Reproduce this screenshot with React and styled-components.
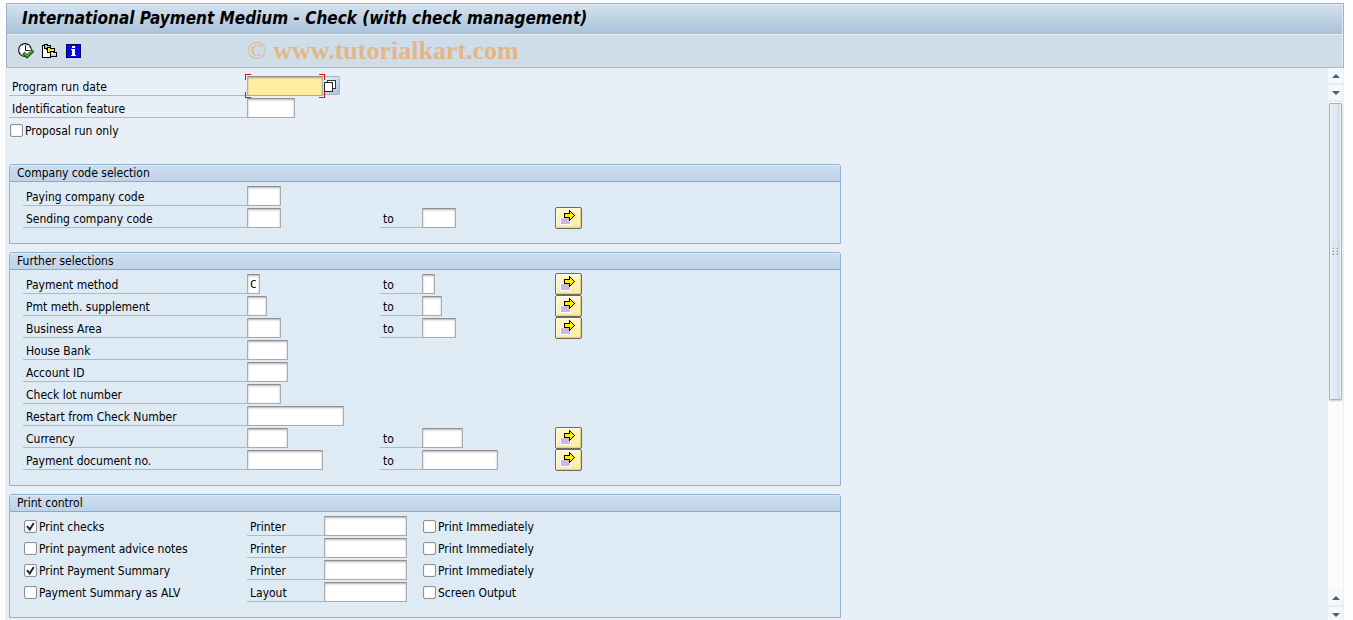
import React, { useState } from 'react';
import styled, { createGlobalStyle, css } from 'styled-components';

const GlobalStyle = createGlobalStyle`
  * {
    box-sizing: border-box;
  }

  body {
    margin: 0;
    background: #fdfdfe;
    color: #000;
    font-family: 'DejaVu Sans Condensed', 'DejaVu Sans', sans-serif;
    font-size: 12px;
    line-height: 18px;
  }

  button, input {
    font: inherit;
    color: inherit;
    margin: 0;
    padding: 0;
  }
`;

const Window = styled.div`
  display: flex;
  flex-direction: column;
  height: 100vh;
  padding: 3px 9px 0 5px;
  overflow: hidden;
`;

const Header = styled.header`
  margin-left: 1px;
  border: 1px solid #9cb0c8;
  border-bottom-color: #a9bac8;
`;

const TitleBar = styled.div`
  height: 31px;
  padding: 0 15px;
  border: 1px solid #e4ecf5;
  border-left-width: 0;
  background: linear-gradient(#d3e1ed, #b9cee2 60%, #a9c1dc);
`;

const Title = styled.h1`
  margin: 0;
  font-size: 17px;
  font-style: italic;
  font-weight: bold;
  line-height: 26px;
  white-space: nowrap;
`;

const Toolbar = styled.div`
  display: flex;
  align-items: center;
  height: 32px;
  padding: 0 11px;
  border-right: 1px solid #e4ecf5;
  background: #cfdde8;
`;

const ToolButton = styled.button`
  display: flex;
  width: 16px;
  height: 16px;
  margin-right: 8px;
  border: none;
  background: none;
  cursor: pointer;
`;

const Watermark = styled.div`
  margin-left: 157px;
  color: #e4b686;
  font-family: 'Liberation Serif', serif;
  font-size: 26px;
  font-weight: bold;
  line-height: 30px;
  white-space: nowrap;

  span {
    font-weight: normal;
  }
`;

const Body = styled.div`
  display: flex;
  flex: 1;
  min-height: 0;
  background: #e8eff7;
`;

const Form = styled.form`
  flex: 1;
  min-width: 0;
  padding: 7px 4px 0;
  overflow: hidden;
`;

const Intro = styled.div`
  margin-bottom: 23px;
`;

const Row = styled.div`
  display: grid;
  grid-template-columns: ${(props) => (props.$outer ? '238px' : '224px')} 133px 42px 133px 27px;
  align-items: center;
  height: 22px;
`;

const PrintRow = styled(Row)`
  grid-template-columns: 224px 77px 98px 1fr;
`;

const Group = styled.section`
  max-width: 832px;
  margin-bottom: 8px;
  padding-bottom: 14px;
  border: 1px solid #90b2d2;
  border-radius: 3px 3px 0 0;
  background: #deeaf4;
`;

const GroupTitle = styled.h2`
  height: 17px;
  margin: 0 0 3px;
  padding-left: 7px;
  border-top: 1px solid #dfeaf5;
  border-bottom: 1px solid #8aa9cd;
  border-radius: 2px 2px 0 0;
  background: linear-gradient(#cddded, #bed4ea);
  font-size: 12px;
  font-weight: normal;
  line-height: 15px;
`;

const GroupRows = styled.div`
  padding-left: 13px;
`;

const Label = styled.label`
  height: 20px;
  padding-left: 3px;
  border-bottom: 1px solid #b1b8bf;
  line-height: 22px;
  white-space: nowrap;
`;

const Field = styled.input`
  display: block;
  width: ${(props) => props.$width}px;
  height: 20px;
  padding-left: 2px;
  border: 1px solid #a9abae;
  border-top-color: #8f9194;
  border-radius: 1px;
  background: ${(props) => (props.$active ? '#ffeea0' : '#fff')};
  box-shadow: inset 0 1px 2px rgba(80, 80, 100, 0.45);
  font-family: 'DejaVu Sans Mono', monospace;
  font-size: 11px;
  outline: none;
`;

const DateCell = styled.div`
  position: relative;
  display: flex;
  width: 93px;
`;

const corner = css`
  position: absolute;
  width: 6px;
  height: 6px;
  border: 0 solid #dd1010;
`;

const FocusCorner = styled.span`
  ${corner}
  ${(props) => (props.$bottom ? 'bottom: -2px; border-bottom-width: 1px;' : 'top: -2px; border-top-width: 1px;')}
  ${(props) => (props.$right ? 'left: 72px; border-right-width: 1px;' : 'left: -2px; border-left-width: 1px;')}
`;

const HelpButton = styled.button`
  display: flex;
  align-items: center;
  justify-content: center;
  width: 17px;
  height: 19px;
  padding-right: 2px;
  border: 1px solid #a8b1bc;
  border-left: none;
  border-radius: 0 2px 2px 0;
  background: linear-gradient(135deg, #eef3f9, #aec3dd);
  cursor: pointer;
`;

const MultiButton = styled.button`
  display: flex;
  align-items: center;
  justify-content: center;
  width: 27px;
  height: 22px;
  border: 1px solid #6c6b68;
  border-radius: 2px;
  background: linear-gradient(#fff8cf, #fcea9b);
  box-shadow: inset 1px 1px 0 #fffbe2, inset -1px -1px 0 #e3d184;
  cursor: pointer;
`;

const CheckLabel = styled.label`
  display: flex;
  align-items: center;
  gap: 2px;
  height: 22px;
  padding-left: 1px;
  line-height: 22px;
  white-space: nowrap;
`;

const CheckText = styled.span`
  padding-top: 1px;
`;

const CheckBox = styled.span`
  position: relative;
  display: flex;
  width: 13px;
  height: 13px;

  svg {
    position: absolute;
    inset: 0;
    pointer-events: none;
  }
`;

const CheckInput = styled.input`
  width: 13px;
  height: 13px;
  appearance: none;
  border: 1px solid #8e9093;
  border-radius: 2px;
  background: #fff;
  box-shadow: inset 0 0 1px rgba(80, 80, 100, 0.5);
`;

const ScrollBar = styled.div`
  display: flex;
  flex-direction: column;
  width: 15px;
  margin: 0 1px -4px 0;
  background: #fafbfc;
`;

const ScrollButton = styled.button`
  display: flex;
  flex: none;
  align-items: center;
  justify-content: center;
  height: 17px;
  border: none;
  border-bottom: 2px solid #e6ebf1;
  background: #f5f8fb;
`;

const ScrollTrack = styled.div`
  display: flex;
  flex: 1;
  flex-direction: column;
  padding: 1px 1px 0;
`;

const ScrollThumb = styled.div`
  display: flex;
  align-items: center;
  justify-content: center;
  height: 61%;
  border: 1px solid #9fb1c0;
  border-radius: 1px;
  background: linear-gradient(90deg, #f0f5fa, #dfe9f1 25%, #dfe9f1 60%, #cddbe8 85%, #f0f5fa 95%);
  box-shadow: 0 1px 2px rgba(0, 0, 0, 0.2);
`;

const ExecuteIcon = () => (
  <svg width="16" height="16" viewBox="0 0 16 16">
    <circle cx="7" cy="7" r="6.4" fill="#fff" stroke="#111" strokeWidth="1.1" />
    <circle cx="7" cy="7" r="4.9" fill="none" stroke="#666" strokeWidth="1" strokeDasharray="1 2.85" />
    <path d="M7.5 2.5V7.5H11.5" fill="none" stroke="#111" strokeWidth="1" />
    <path d="M5.5 10L9 13.5L15.3 7.5" fill="none" stroke="#173c0c" strokeWidth="3.2" />
    <path d="M6.3 10.3L9 13L14.8 7.5" fill="none" stroke="#5cb52d" strokeWidth="1.7" />
  </svg>
);

const VariantIcon = () => (
  <svg width="16" height="16" viewBox="0 0 16 16" shapeRendering="crispEdges">
    <path d="M0.5 2.5H4.5V6.5H6.5V9.5H8.5V14.5H0.5Z" fill="#fff" stroke="#000" />
    <path d="M2.5 1.5H5.5V2.5H8.5V5.5H2.5Z" fill="#aebad0" stroke="#000" />
    <path d="M5.5 4.5H8.5V5.5H12.5V9.5H5.5Z" fill="#fff27a" stroke="#000" />
    <path d="M6 6H12V9H6Z" fill="#ffe800" />
    <path d="M8.5 8.5H11.5V9.5H14.5V13.5H8.5Z" fill="#c8d0de" stroke="#000" />
    <path d="M9 10H14V11H9Z" fill="#fff" />
  </svg>
);

const InfoIcon = () => (
  <svg width="16" height="16" viewBox="0 0 16 16" shapeRendering="crispEdges">
    <rect x="0" y="1" width="15" height="14" fill="#000060" />
    <rect x="1" y="2" width="13" height="12" fill="#0808f0" />
    <path d="M6 3H9V5H6ZM5 6H9V12H10V13H5V12H6V7H5Z" fill="#fff" />
  </svg>
);

const HelpIcon = () => (
  <svg width="12" height="12" viewBox="0 0 12 12" shapeRendering="crispEdges">
    <path d="M3.5 0.5H11.5V8.5H3.5Z" fill="#fff" stroke="#333" />
    <path d="M0.5 2.5H8.5V11.5H0.5Z" fill="#fff" stroke="#222" />
  </svg>
);

const ArrowIcon = () => (
  <svg width="17" height="16" viewBox="0 0 17 16" shapeRendering="crispEdges">
    <rect x="0" y="7" width="11" height="8" fill="#fff" />
    <rect x="1" y="8" width="9" height="6" fill="#cdb9dc" />
    <path d="M4.5 3.5H9.5V0.5L14.5 5.5L9.5 10.5V7.5H4.5Z" fill="#ffec00" stroke="#000" />
  </svg>
);

const TriangleIcon = ({ down }) => (
  <svg width="10" height="6" viewBox="0 0 10 6">
    <path d={down ? 'M1 1H9L5 5Z' : 'M1 5H9L5 1Z'} fill="#4d6170" />
  </svg>
);

const GripIcon = () => (
  <svg width="7" height="9" viewBox="0 0 7 9" shapeRendering="crispEdges">
    {[0, 3, 6].map((y) => (
      <g key={y}>
        <path d={`M0 ${y}h2v2h-2zM4 ${y}h2v2h-2z`} fill="#a3b3c1" />
        <path d={`M0 ${y}h1v1h-1zM4 ${y}h1v1h-1z`} fill="#fff" />
      </g>
    ))}
  </svg>
);

const Check = ({ label, defaultChecked = false }) => {
  const [checked, setChecked] = useState(defaultChecked);
  return (
    <CheckLabel>
      <CheckBox>
        <CheckInput type="checkbox" checked={checked} onChange={(e) => setChecked(e.target.checked)} />
        {checked && (
          <svg width="13" height="13" viewBox="0 0 13 13">
            <path d="M3 6.2L5.7 9.5L9.8 3" fill="none" stroke="#26263c" strokeWidth="2" />
          </svg>
        )}
      </CheckBox>
      <CheckText>{label}</CheckText>
    </CheckLabel>
  );
};

const SelectionRow = ({ id, label, width, value, range }) => (
  <Row>
    <Label htmlFor={id}>{label}</Label>
    <Field id={id} $width={width} defaultValue={value} />
    {range && (
      <>
        <Label htmlFor={`${id}-to`}>to</Label>
        <Field id={`${id}-to`} $width={width} />
        <MultiButton type="button" aria-label={`Multiple selection for ${label}`}>
          <ArrowIcon />
        </MultiButton>
      </>
    )}
  </Row>
);

const companyRows = [
  { id: 'paying', label: 'Paying company code', width: 34 },
  { id: 'sending', label: 'Sending company code', width: 34, range: true },
];

const furtherRows = [
  { id: 'method', label: 'Payment method', width: 13, value: 'C', range: true },
  { id: 'supplement', label: 'Pmt meth. supplement', width: 20, range: true },
  { id: 'area', label: 'Business Area', width: 34, range: true },
  { id: 'bank', label: 'House Bank', width: 41 },
  { id: 'account', label: 'Account ID', width: 41 },
  { id: 'lot', label: 'Check lot number', width: 34 },
  { id: 'restart', label: 'Restart from Check Number', width: 97 },
  { id: 'currency', label: 'Currency', width: 41, range: true },
  { id: 'document', label: 'Payment document no.', width: 76, range: true },
];

const printRows = [
  { id: 'checks', label: 'Print checks', checked: true, target: 'Printer', option: 'Print Immediately' },
  { id: 'advice', label: 'Print payment advice notes', target: 'Printer', option: 'Print Immediately' },
  { id: 'summary', label: 'Print Payment Summary', checked: true, target: 'Printer', option: 'Print Immediately' },
  { id: 'alv', label: 'Payment Summary as ALV', target: 'Layout', option: 'Screen Output' },
];

const App = () => (
  <>
    <GlobalStyle />
    <Window>
      <Header>
        <TitleBar>
          <Title>International Payment Medium - Check (with check management)</Title>
        </TitleBar>
        <Toolbar>
          <ToolButton type="button" aria-label="Execute"><ExecuteIcon /></ToolButton>
          <ToolButton type="button" aria-label="Get variant"><VariantIcon /></ToolButton>
          <ToolButton type="button" aria-label="Information"><InfoIcon /></ToolButton>
          <Watermark><span>©</span> www.tutorialkart.com</Watermark>
        </Toolbar>
      </Header>
      <Body>
        <Form onSubmit={(e) => e.preventDefault()}>
          <Intro>
            <Row $outer>
              <Label htmlFor="run-date">Program run date</Label>
              <DateCell>
                <Field id="run-date" $width={76} $active />
                <HelpButton type="button" aria-label="Choose date"><HelpIcon /></HelpButton>
                <FocusCorner />
                <FocusCorner $right />
                <FocusCorner $bottom />
                <FocusCorner $right $bottom />
              </DateCell>
            </Row>
            <Row $outer>
              <Label htmlFor="feature">Identification feature</Label>
              <Field id="feature" $width={48} />
            </Row>
            <Check label="Proposal run only" />
          </Intro>

          <Group>
            <GroupTitle>Company code selection</GroupTitle>
            <GroupRows>
              {companyRows.map((row) => <SelectionRow key={row.id} {...row} />)}
            </GroupRows>
          </Group>

          <Group>
            <GroupTitle>Further selections</GroupTitle>
            <GroupRows>
              {furtherRows.map((row) => <SelectionRow key={row.id} {...row} />)}
            </GroupRows>
          </Group>

          <Group>
            <GroupTitle>Print control</GroupTitle>
            <GroupRows>
              {printRows.map((row) => (
                <PrintRow key={row.id}>
                  <Check label={row.label} defaultChecked={row.checked} />
                  <Label htmlFor={row.id}>{row.target}</Label>
                  <Field id={row.id} $width={83} />
                  <Check label={row.option} />
                </PrintRow>
              ))}
            </GroupRows>
          </Group>
        </Form>
        <ScrollBar>
          <ScrollButton type="button" aria-label="Scroll to top"><TriangleIcon /></ScrollButton>
          <ScrollButton type="button" aria-label="Scroll down a line"><TriangleIcon down /></ScrollButton>
          <ScrollTrack>
            <ScrollThumb><GripIcon /></ScrollThumb>
          </ScrollTrack>
          <ScrollButton type="button" aria-label="Scroll up a line"><TriangleIcon /></ScrollButton>
          <ScrollButton type="button" aria-label="Scroll to bottom"><TriangleIcon down /></ScrollButton>
        </ScrollBar>
      </Body>
    </Window>
  </>
);

export default App;
